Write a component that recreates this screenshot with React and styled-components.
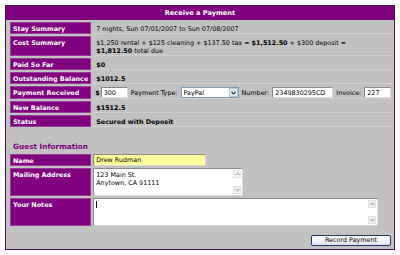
import styled, { createGlobalStyle } from "styled-components";

const GlobalStyle = createGlobalStyle`
  body {
    margin: 0;
    background: #ffffff;
    font-family: "DejaVu Sans", Verdana, sans-serif;
  }
`;

const Panel = styled.div`
  box-sizing: border-box;
  margin: 5px 0 0 5px;
  width: 390px;
  height: 245px;
  border: 1px solid #4b1048;
  background: #c2c2c2;
  display: flex;
  flex-direction: column;
`;

const Header = styled.div`
  height: 14px;
  line-height: 14px;
  background: #800080;
  color: #ffffff;
  font-weight: bold;
  font-size: 6.6px;
  text-align: center;
`;

const Body = styled.div`
  padding: 0 2px;
`;

const Table = styled.table`
  width: 100%;
  border-collapse: separate;
  border-spacing: 2px;
  font-size: 6.4px;
  line-height: 8px;
`;

const Label = styled.td`
  width: 75px;
  background: #800080;
  color: #ffffff;
  font-weight: bold;
  vertical-align: top;
  padding: 3px 3px 1px;
  box-shadow: inset 0 0 0 1px #9a3a9a;
  white-space: nowrap;
`;

const Value = styled.td`
  color: #000000;
  vertical-align: top;
  padding: ${(p) => (p.$flush ? "0" : p.$tight ? "1px 1px" : "3px 3px 1px")};
  box-shadow: ${(p) => (p.$flush ? "none" : "inset 0 -1px 0 #cfcfcf")};
`;

const SectionCell = styled.td`
  height: 22px;
  vertical-align: bottom;
  padding: 0 3px 1px;
  color: #800080;
  font-weight: bold;
  font-size: 7.3px;
  line-height: 9px;
`;

const Inline = styled.div`
  display: flex;
  align-items: center;
  gap: 3px;
  white-space: nowrap;
`;

const Dollar = styled.span`
  margin-left: 1px;
  margin-right: -2px;
  font-weight: bold;
`;

const TextInput = styled.input`
  box-sizing: border-box;
  width: ${(p) => p.$w}px;
  height: ${(p) => p.$h || 11}px;
  padding: 0 2px;
  margin: 0;
  border: 1px solid #8a8a8a;
  border-right-color: #d8d8d8;
  border-bottom-color: #d8d8d8;
  background: ${(p) => (p.$yellow ? "#ffff99" : "#ffffff")};
  font-family: "DejaVu Sans", Verdana, sans-serif;
  font-size: 6.4px;
  color: #000000;
  outline: none;
`;

const SelectWrap = styled.div`
  position: relative;
  width: 58px;
  height: 11px;
`;

const Select = styled.select`
  appearance: none;
  box-sizing: border-box;
  width: 100%;
  height: 100%;
  margin: 0;
  padding: 0 0 0 2px;
  border: 1px solid #7f9db9;
  background: #ffffff;
  font-family: "DejaVu Sans", Verdana, sans-serif;
  font-size: 6.4px;
  color: #000000;
  outline: none;
`;

const SelectArrow = styled.span`
  position: absolute;
  top: 1px;
  right: 1px;
  width: 9px;
  height: 9px;
  box-sizing: border-box;
  border: 1px solid #b8c6dc;
  background: #e6ecf6;
  display: flex;
  align-items: center;
  justify-content: center;
  pointer-events: none;
`;

const AreaWrap = styled.div`
  position: relative;
  width: ${(p) => p.$w}px;
  height: 28px;
`;

const TextArea = styled.textarea`
  box-sizing: border-box;
  display: block;
  width: 100%;
  height: 100%;
  margin: 0;
  padding: 2px 12px 0 2px;
  border: 1px solid #8a8a8a;
  border-right-color: #d8d8d8;
  border-bottom-color: #d8d8d8;
  background: #ffffff;
  resize: none;
  overflow: hidden;
  font-family: "DejaVu Sans", Verdana, sans-serif;
  font-size: 6.4px;
  line-height: 8px;
  color: #000000;
  outline: none;
`;

const ScrollBar = styled.div`
  position: absolute;
  top: 2px;
  right: 2px;
  bottom: 2px;
  width: 8px;
  display: flex;
  flex-direction: column;
  justify-content: space-between;
  pointer-events: none;
`;

const ScrollButton = styled.span`
  width: 8px;
  height: 8px;
  box-sizing: border-box;
  border: 1px solid #e0e0e0;
  background: #f4f4f4;
  display: flex;
  align-items: center;
  justify-content: center;
`;

const Caret = styled.span`
  position: absolute;
  left: 3px;
  top: 3px;
  width: 1px;
  height: 7px;
  background: #111111;
`;

const Footer = styled.div`
  display: flex;
  justify-content: flex-end;
  padding: 7px 3px 0;
`;

const Button = styled.button`
  box-sizing: border-box;
  width: 80px;
  height: 11px;
  padding: 0;
  border: 1px solid #1c3a6e;
  border-radius: 2px;
  background: linear-gradient(#ffffff, #eeeef4 70%, #d8dcec);
  font-family: "DejaVu Sans", Verdana, sans-serif;
  font-size: 6.4px;
  line-height: 9px;
  color: #000000;
`;

function Chevron({ up, color = "#222222" }) {
  return (
    <svg width="5" height="4" viewBox="0 0 5 4">
      <polyline
        points={up ? "0.5,3.2 2.5,1 4.5,3.2" : "0.5,0.8 2.5,3 4.5,0.8"}
        fill="none"
        stroke={color}
        strokeWidth="1.1"
      />
    </svg>
  );
}

function Area({ width, value, caret }) {
  return (
    <AreaWrap $w={width}>
      <TextArea defaultValue={value} />
      {caret && <Caret />}
      <ScrollBar>
        <ScrollButton>
          <Chevron up color="#a8a8a8" />
        </ScrollButton>
        <ScrollButton>
          <Chevron color="#a8a8a8" />
        </ScrollButton>
      </ScrollBar>
    </AreaWrap>
  );
}

export default function App() {
  return (
    <>
      <GlobalStyle />
      <Panel>
        <Header>Receive a Payment</Header>
        <Body>
          <Table>
            <tbody>
              <tr>
                <Label>Stay Summary</Label>
                <Value>7 nights, Sun 07/01/2007 to Sun 07/08/2007</Value>
              </tr>
              <tr>
                <Label>Cost Summary</Label>
                <Value>
                  $1,250 rental + $125 cleaning + $137.50 tax = <b>$1,512.50</b> + $300 deposit =
                  <br />
                  <b>$1,812.50</b> total due
                </Value>
              </tr>
              <tr>
                <Label>Paid So Far</Label>
                <Value>
                  <b>$0</b>
                </Value>
              </tr>
              <tr>
                <Label>Outstanding Balance</Label>
                <Value>
                  <b>$1012.5</b>
                </Value>
              </tr>
              <tr>
                <Label>Payment Received</Label>
                <Value $tight>
                  <Inline>
                    <Dollar>$</Dollar>
                    <TextInput $w={27} defaultValue="300" />
                    <span>Payment Type:</span>
                    <SelectWrap>
                      <Select defaultValue="PayPal">
                        <option>PayPal</option>
                        <option>Check</option>
                        <option>Cash</option>
                      </Select>
                      <SelectArrow>
                        <Chevron />
                      </SelectArrow>
                    </SelectWrap>
                    <span>Number:</span>
                    <TextInput $w={61} defaultValue="2349830295CD" />
                    <span>Invoice:</span>
                    <TextInput $w={27} defaultValue="227" />
                  </Inline>
                </Value>
              </tr>
              <tr>
                <Label>New Balance</Label>
                <Value>
                  <b>$1512.5</b>
                </Value>
              </tr>
              <tr>
                <Label>Status</Label>
                <Value>
                  <b>Secured with Deposit</b>
                </Value>
              </tr>
              <tr>
                <SectionCell colSpan={2}>Guest Information</SectionCell>
              </tr>
              <tr>
                <Label>Name</Label>
                <Value $flush>
                  <TextInput $w={113} $h={12} $yellow defaultValue="Drew Rudman" />
                </Value>
              </tr>
              <tr>
                <Label>Mailing Address</Label>
                <Value $flush>
                  <Area width={150} value={"123 Main St.\nAnytown, CA 91111"} />
                </Value>
              </tr>
              <tr>
                <Label>Your Notes</Label>
                <Value $flush>
                  <Area width={285} value="" caret />
                </Value>
              </tr>
            </tbody>
          </Table>
        </Body>
        <Footer>
          <Button type="button">Record Payment</Button>
        </Footer>
      </Panel>
    </>
  );
}
